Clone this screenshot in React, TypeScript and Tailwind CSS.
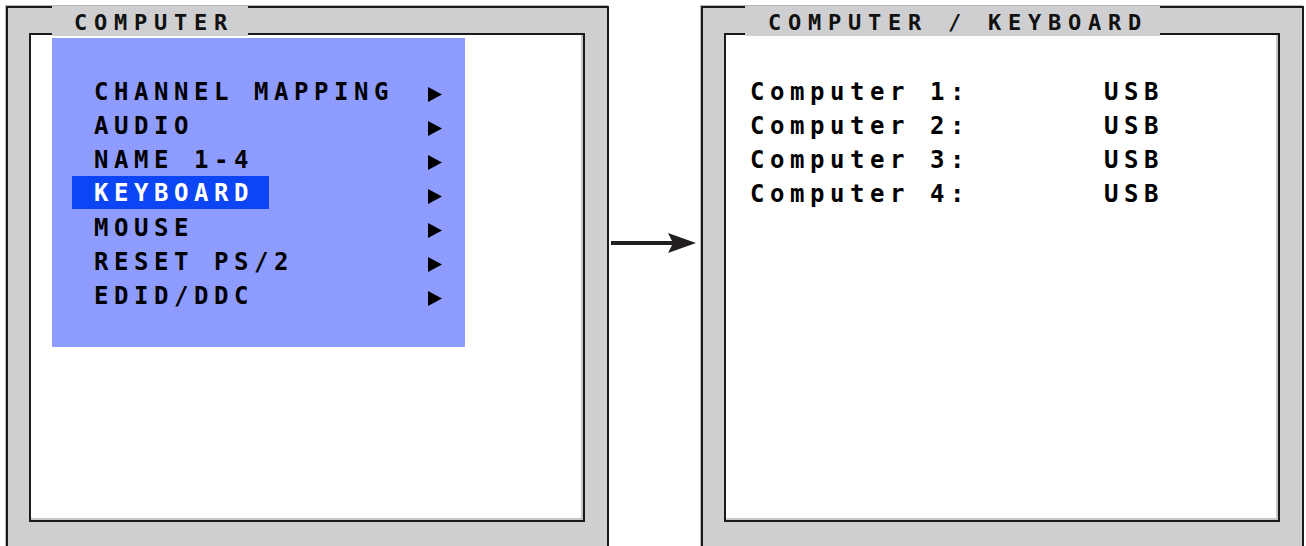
import React from "react";

const menu = [
  "CHANNEL MAPPING",
  "AUDIO",
  "NAME 1-4",
  "KEYBOARD",
  "MOUSE",
  "RESET PS/2",
  "EDID/DDC",
];

function Tri() {
  return (
    <svg width="14" height="15" viewBox="0 0 14 15" className="mt-[12px] shrink-0">
      <polygon points="0,0 14,7.5 0,15" fill="#000" />
    </svg>
  );
}

function Panel({
  title,
  tabClass,
  children,
}: {
  title: string;
  tabClass: string;
  children: React.ReactNode;
}) {
  return (
    <div className="relative w-[603px] h-[560px] shrink-0 border-2 border-b-0 border-[#1a1a1a] bg-[#cfcfd1] pt-[25px] pl-[21px] pr-[22px] shadow-[-1px_-1px_0_#b8b8b8]">
      <div className="h-[489px] border-2 border-[#1a1a1a] bg-white shadow-[inset_-2px_-2px_0_#c6c6c6]">
        {children}
      </div>
      <div
        className={
          "absolute top-[-2px] h-[30px] bg-[#cfcfd1] text-[22px] leading-[33px] tracking-[6.75px] text-[#111] whitespace-pre " +
          tabClass
        }
      >
        {title}
      </div>
    </div>
  );
}

export default function App() {
  return (
    <div className="w-[1306px] h-[546px] overflow-hidden bg-white flex items-start pt-[6px] pl-[6px] font-['DejaVu_Sans_Mono',monospace] font-bold">
      <Panel title="COMPUTER" tabClass="left-[44px] w-[196px] pl-[22px]">
        <div className="mt-[3px] ml-[21px] w-[413px] h-[309px] bg-[#8e9cff] pt-[37px] pl-[20px]">
          {menu.map((m) => (
            <div key={m} className="flex h-[34px]">
              <div className="w-[356px] shrink-0">
                {m === "KEYBOARD" ? (
                  <div className="w-[197px] h-[33px] -mt-[1px] bg-[#0b45f5] pl-[22px] text-[24px] leading-[35px] tracking-[5.55px] text-white">
                    {m}
                  </div>
                ) : (
                  <div className="pl-[22px] text-[24px] leading-[34px] tracking-[5.55px] text-black whitespace-pre">
                    {m}
                  </div>
                )}
              </div>
              <Tri />
            </div>
          ))}
        </div>
      </Panel>

      <div className="w-[92px] shrink-0 pt-[227px] pl-[2px]">
        <svg width="85" height="20" viewBox="0 0 85 20">
          <rect x="0" y="8" width="64" height="4" fill="#231f20" />
          <path d="M57 0 L85 10 L57 20 L62 10 Z" fill="#231f20" />
        </svg>
      </div>

      <Panel title="COMPUTER / KEYBOARD" tabClass="left-[42px] w-[415px] pl-[23px]">
        <div className="pt-[40px] pl-[24px]">
          {[1, 2, 3, 4].map((n) => (
            <div key={n} className="flex h-[34px] text-[24px] leading-[34px] tracking-[5.55px] text-black whitespace-pre">
              <div className="w-[354px] shrink-0">{`Computer ${n}:`}</div>
              <div>USB</div>
            </div>
          ))}
        </div>
      </Panel>
    </div>
  );
}
